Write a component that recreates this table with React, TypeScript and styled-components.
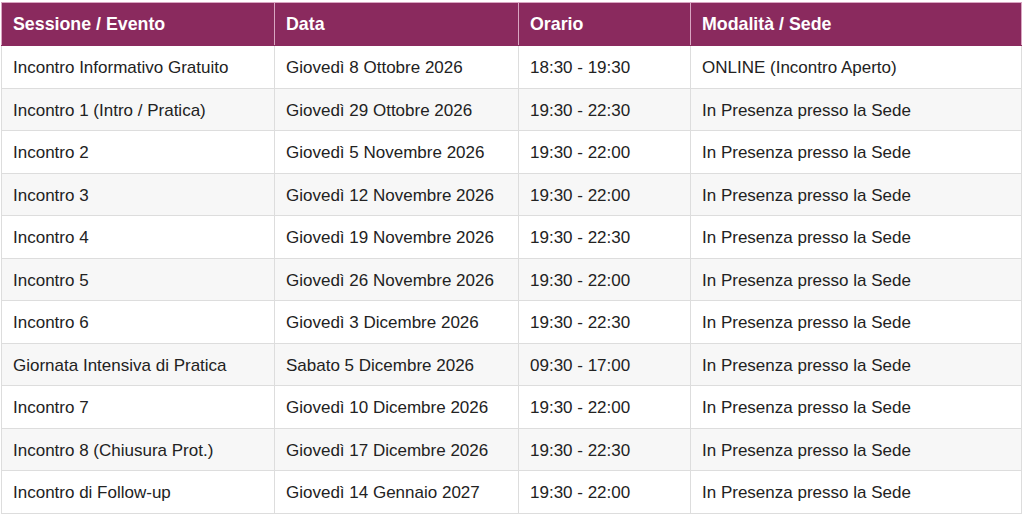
import React from "react";
import styled, { createGlobalStyle } from "styled-components";

const Global = createGlobalStyle`
  html, body { margin: 0; padding: 0; background: #ffffff; }
  body { font-family: "Liberation Sans", Arial, sans-serif; }
`;

const Wrap = styled.div`
  padding: 2px 3px 0 1px;
`;

const Table = styled.table`
  width: 1020px;
  border-collapse: collapse;
  table-layout: fixed;
  font-family: "Liberation Sans", Arial, sans-serif;
  font-size: 17px;
  color: #222222;
`;

const HeadCell = styled.th<{ $w: number }>`
  box-sizing: border-box;
  width: ${(p) => p.$w}px;
  background: #8a2a5e;
  color: #ffffff;
  font-size: 17.8px;
  font-weight: bold;
  text-align: left;
  padding: 12px 11px;
  line-height: 18px;
  border: 1px solid #d9a6c2;
  border-bottom-color: #8a2a5e;
`;

const Row = styled.tr<{ $alt: boolean }>`
  background: ${(p) => (p.$alt ? "#f7f7f7" : "#ffffff")};
`;

const Cell = styled.td`
  box-sizing: border-box;
  padding: 13px 11px 11px 11px;
  line-height: 17.5px;
  border: 1px solid #dddddd;
  white-space: nowrap;
  overflow: hidden;
  vertical-align: middle;
`;

const cols = [
  { label: "Sessione / Evento", w: 273 },
  { label: "Data", w: 244 },
  { label: "Orario", w: 172 },
  { label: "Modalità / Sede", w: 331 },
];

const sede = "In Presenza presso la Sede";

const rows: string[][] = [
  ["Incontro Informativo Gratuito", "Giovedì 8 Ottobre 2026", "18:30 - 19:30", "ONLINE (Incontro Aperto)"],
  ["Incontro 1 (Intro / Pratica)", "Giovedì 29 Ottobre 2026", "19:30 - 22:30", sede],
  ["Incontro 2", "Giovedì 5 Novembre 2026", "19:30 - 22:00", sede],
  ["Incontro 3", "Giovedì 12 Novembre 2026", "19:30 - 22:00", sede],
  ["Incontro 4", "Giovedì 19 Novembre 2026", "19:30 - 22:30", sede],
  ["Incontro 5", "Giovedì 26 Novembre 2026", "19:30 - 22:00", sede],
  ["Incontro 6", "Giovedì 3 Dicembre 2026", "19:30 - 22:30", sede],
  ["Giornata Intensiva di Pratica", "Sabato 5 Dicembre 2026", "09:30 - 17:00", sede],
  ["Incontro 7", "Giovedì 10 Dicembre 2026", "19:30 - 22:00", sede],
  ["Incontro 8 (Chiusura Prot.)", "Giovedì 17 Dicembre 2026", "19:30 - 22:30", sede],
  ["Incontro di Follow-up", "Giovedì 14 Gennaio 2027", "19:30 - 22:00", sede],
];

export default function App() {
  return (
    <>
      <Global />
      <Wrap>
        <Table>
          <thead>
            <tr>
              {cols.map((c) => (
                <HeadCell key={c.label} $w={c.w}>
                  {c.label}
                </HeadCell>
              ))}
            </tr>
          </thead>
          <tbody>
            {rows.map((r, i) => (
              <Row key={i} $alt={i % 2 === 1}>
                {r.map((v, j) => (
                  <Cell key={j}>{v}</Cell>
                ))}
              </Row>
            ))}
          </tbody>
        </Table>
      </Wrap>
    </>
  );
}
